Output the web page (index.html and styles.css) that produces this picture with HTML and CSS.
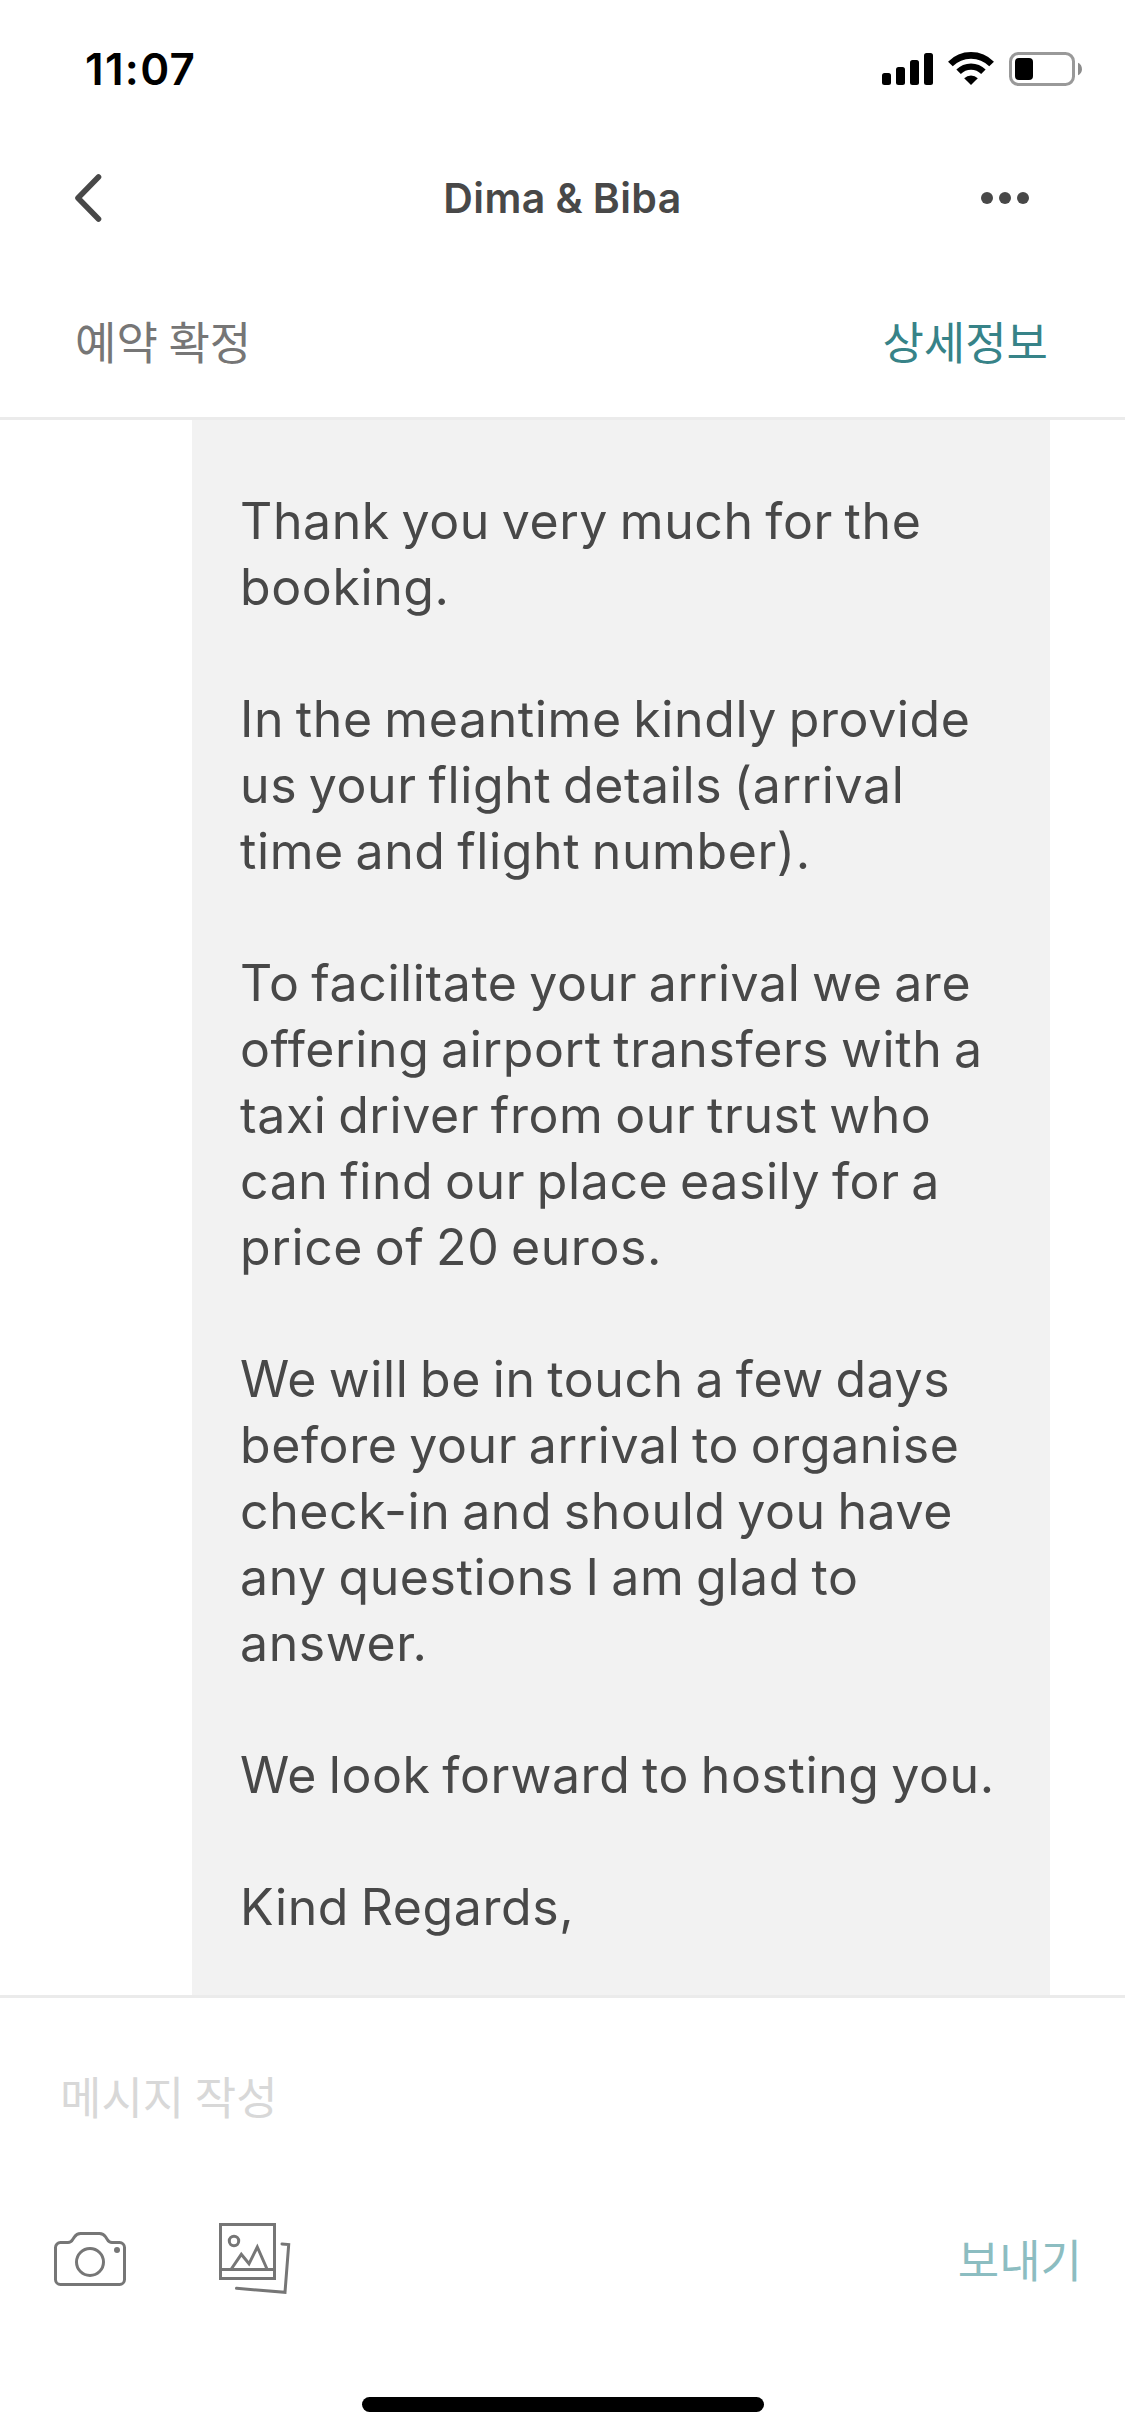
FILE: index.html
```html
<!DOCTYPE html>
<html lang="ko">
<head>
    <meta charset="UTF-8">
    <meta name="viewport" content="width=device-width, initial-scale=1.0">
    <title>Dima &amp; Biba</title>
    <link rel="stylesheet" href="styles.css">
</head>
<body>

    <div class="screen">
        <div class="status-bar">
            <span class="time">11:07</span>
            <svg class="status-icons" width="200" height="34" viewBox="0 0 200 34">
                <!-- signal -->
                <rect x="0" y="21" width="9" height="12" rx="2.5"/>
                <rect x="14" y="15" width="9" height="18" rx="2.5"/>
                <rect x="28" y="8" width="9" height="25" rx="2.5"/>
                <rect x="42" y="1" width="9" height="32" rx="2.5"/>
                <!-- wifi -->
                <path d="M68.4 12A28.8 28.8 0 0 1 109.6 12" fill="none" stroke="#000" stroke-width="6.6"/>
                <path d="M76.6 19.8A17.5 17.5 0 0 1 101.4 19.8" fill="none" stroke="#000" stroke-width="6.3"/>
                <path d="M82.2 26.2A10 10 0 0 1 95.8 26.2L89 33Z"/>
                <!-- battery -->
                <rect x="128.5" y="1.5" width="63" height="31" rx="8" fill="none" stroke="#999" stroke-width="3"/>
                <rect x="133" y="6" width="18" height="22" rx="4"/>
                <path d="M196 10.7C201.3 13 201.3 21 196 23.3Z" fill="#8c8c8c"/>
            </svg>
        </div>

        <div class="nav-bar">
            <svg class="back" width="30" height="50" viewBox="0 0 30 50">
                <path d="M24.5 4L4 25L24.5 46" fill="none" stroke="#484848" stroke-width="5.6" stroke-linecap="round" stroke-linejoin="round"/>
            </svg>
            <h1 class="title">Dima &amp; Biba</h1>
            <div class="more"><span></span><span></span><span></span></div>
        </div>

        <div class="booking-bar">
            <span class="booking-status">예약 확정</span>
            <a class="booking-link">상세정보</a>
        </div>

        <div class="messages">
            <div class="bubble">
                <p>Thank you very much for the<br>booking.</p>
                <p>In the meantime kindly provide<br>us your flight details (arrival<br>time and flight number).</p>
                <p>To facilitate your arrival we are<br>offering airport transfers with a<br>taxi driver from our trust who<br>can find our place easily for a<br>price of 20 euros.</p>
                <p>We will be in touch a few days<br>before your arrival to organise<br>check-in and should you have<br>any questions I am glad to<br>answer.</p>
                <p>We look forward to hosting you.</p>
                <p>Kind Regards,</p>
            </div>
        </div>

        <div class="composer">
            <div class="placeholder">메시지 작성</div>
            <div class="toolbar">
                <svg class="icon" width="72" height="54" viewBox="0 0 72 54">
                    <path d="M6.5 10.5H14C16.5 10.5 17.5 9.5 18.7 7.5L20.5 4.8C22 2.5 23.5 1.5 26.5 1.5H45.5C48.5 1.5 50 2.5 51.5 4.8L53.3 7.5C54.5 9.5 55.5 10.5 58 10.5H65.5A5 5 0 0 1 70.5 15.5V47.5A5 5 0 0 1 65.5 52.5H6.5A5 5 0 0 1 1.5 47.5V15.5A5 5 0 0 1 6.5 10.5Z"/>
                    <circle cx="36" cy="30" r="13.5"/>
                    <circle class="dot" cx="63" cy="18" r="3"/>
                </svg>
                <svg class="icon" width="72" height="72" viewBox="0 0 72 72">
                    <rect x="1.5" y="1.5" width="54" height="54"/>
                    <path d="M1.5 46.5H55.5"/>
                    <circle cx="15" cy="18" r="4.7"/>
                    <path d="M12.3 46L22.3 31.3L30 40.8L38.3 24L48 46"/>
                    <path d="M63 21L69.7 21.6L66 69.3L17.5 65.3" stroke-linecap="round"/>
                </svg>
                <span class="send">보내기</span>
            </div>
            <div class="home-indicator"></div>
        </div>
    </div>

</body>
</html>
```
FILE: styles.css
```css
* {
    box-sizing: border-box;
}
body {
    margin: 0;
    background-color: #fff;
    font-family: Inter, "Noto Sans CJK KR", sans-serif;
    color: #484848;
}
svg {
    display: block;
}
.screen {
    width: 1125px;
    height: 2436px;
    display: flex;
    flex-direction: column;
    overflow: hidden;
}
.status-bar {
    height: 138px;
    padding: 0 43px 0 85px;
    display: flex;
    align-items: center;
    justify-content: space-between;
}
.time {
    font-size: 44px;
    font-weight: 600;
    letter-spacing: 1.3px;
    color: #000;
}
.nav-bar {
    height: 120px;
    padding: 0 74px;
    display: grid;
    grid-template-columns: 1fr auto 1fr;
    align-items: center;
}
.title {
    margin: 0;
    font-size: 41px;
    font-weight: 600;
    letter-spacing: 0.4px;
    word-spacing: -1px;
}
.more {
    margin-right: 22px;
    display: flex;
    gap: 6px;
    justify-content: flex-end;
}
.more span {
    width: 12px;
    height: 12px;
    border-radius: 50%;
    background-color: #484848;
}
.booking-bar {
    height: 162px;
    padding: 6px 77px 0 75px;
    display: flex;
    align-items: center;
    justify-content: space-between;
    border-bottom: 3px solid #ebebeb;
    font-family: "Noto Sans CJK KR", sans-serif;
    font-size: 45px;
}
.booking-status {
    color: #767676;
    word-spacing: -2px;
}
.booking-link {
    color: #378388;
}
.messages {
    flex: 1;
    padding: 0 75px 0 192px;
    overflow: hidden;
}
.bubble {
    height: 100%;
    padding: 68px 20px 0 48px;
    background-color: #f2f2f2;
    font-size: 50px;
    line-height: 66px;
    letter-spacing: 0.6px;
    word-spacing: -3px;
    white-space: nowrap;
}
.bubble p {
    margin: 0 0 66px;
}
.composer {
    height: 441px;
    border-top: 3px solid #ebebeb;
    font-family: "Noto Sans CJK KR", sans-serif;
    font-size: 45px;
}
.placeholder {
    padding: 65px 60px 0;
    line-height: 66px;
    word-spacing: -2px;
    color: #d8d8d8;
}
.toolbar {
    height: 120px;
    margin-top: 70px;
    padding: 0 43px 0 54px;
    display: flex;
    align-items: center;
    gap: 93px;
}
.icon {
    fill: none;
    stroke: #767676;
    stroke-width: 3;
}
.icon .dot {
    fill: #767676;
    stroke: none;
}
.send {
    margin: 0 0 2px auto;
    color: #8cbdc1;
}
.home-indicator {
    width: 402px;
    height: 15px;
    margin: 78px auto 0;
    border-radius: 8px;
    background-color: #000;
}
```
